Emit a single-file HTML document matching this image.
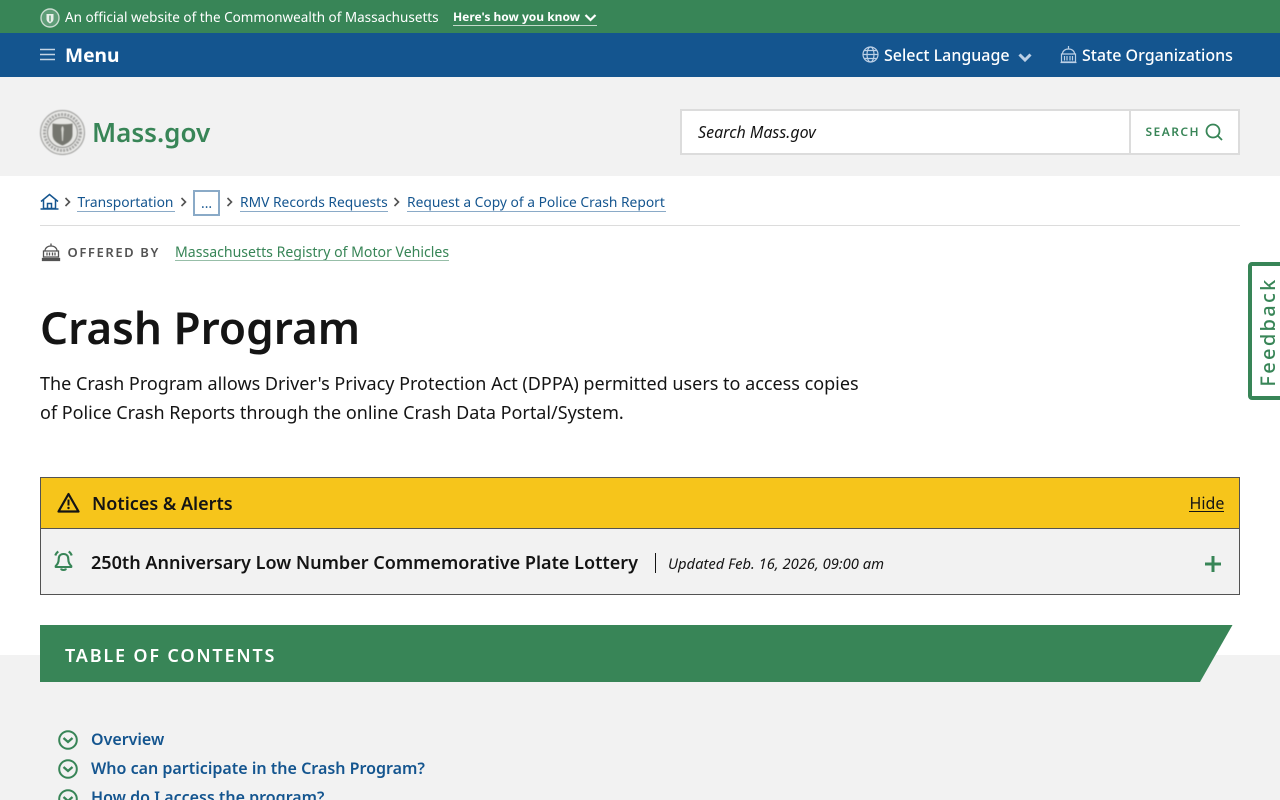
<!DOCTYPE html>
<html lang="en"><head><meta charset="utf-8"><title>Crash Program | Mass.gov</title>
<style>
html,body{margin:0;padding:0;width:1280px;height:800px;overflow:hidden;background:#fff}
body{position:relative;font-family:"Noto Sans","Liberation Sans",sans-serif;color:#141414}
.b{position:absolute}
.t{position:absolute;white-space:nowrap;line-height:1}
.u{position:absolute;height:1px}
svg{position:absolute;overflow:visible}
</style></head><body>
<div class="b" style="left:0;top:0;width:1280px;height:33px;background:#388557"></div>
<div class="b" style="left:0;top:33px;width:1280px;height:44px;background:#14558f"></div>
<div class="b" style="left:0;top:77px;width:1280px;height:99px;background:#f2f2f2"></div>
<div class="b" style="left:0;top:655px;width:1280px;height:145px;background:#f2f2f2"></div>

<svg style="left:40px;top:8px;filter:blur(.3px)" width="20" height="20" viewBox="0 0 20 20"><circle cx="10" cy="10" r="9" fill="#5f9d78" stroke="#c8dccf" stroke-width="1.4"/><path d="M6.500 6h7v5c0 2.200-1.800 3.500-3.500 4.500-1.700-1-3.500-2.300-3.500-4.500z" fill="#e8f0ea"/><path d="M10 7.500v6" stroke="#5f9d78" stroke-width="1.500"/></svg>
<div class="t" style="left:65px;top:11px;font-size:13.500px;color:#fff">An official website of the Commonwealth of Massachusetts</div>
<div class="t" style="left:453px;top:11px;font-size:12px;font-weight:700;color:#fff">Here's how you know</div>
<svg style="left:584px;top:13px" width="13" height="10" viewBox="0 0 13 10"><path d="M1.500 2l5 5 5-5" fill="none" stroke="#fff" stroke-width="2.200"/></svg>
<div class="u" style="left:453px;top:25px;width:144px;background:#c3dacb"></div>

<svg style="left:40px;top:47.500px" width="15" height="14" viewBox="0 0 15 14"><path d="M0 1.500h15M0 6.500h15M0 11.500h15" stroke="#c5d5e5" stroke-width="1.500"/></svg>
<div class="t" style="left:65px;top:45px;font-size:19.200px;font-weight:700;color:#fff">Menu</div>
<svg style="left:862px;top:46px" width="17" height="17" viewBox="0 0 17 17" fill="none" stroke="#bcd0e6" stroke-width="1.200"><circle cx="8.500" cy="8.500" r="7.500"/><ellipse cx="8.500" cy="8.500" rx="3.500" ry="7.500"/><path d="M1 8.500h15M2 4.500h13M2 12.500h13"/></svg>
<div class="t" style="left:884px;top:47px;font-size:16px;font-weight:500;color:#fff">Select Language</div>
<svg style="left:1018px;top:52px" width="14" height="11" viewBox="0 0 14 11"><path d="M1.500 2.500l5.500 5.500 5.500-5.500" fill="none" stroke="#bcd0e6" stroke-width="3"/></svg>
<svg style="left:1060px;top:46px" width="17" height="18" viewBox="0 0 17 18" fill="none" stroke="#bcd0e6" stroke-width="1.200"><path d="M2.500 8c0-3 2.500-5 6-5s6 2 6 5zM8.500 0v3M1.500 8h14v8h-14zM.5 16.500h16M4.500 10v4.500M7 10v4.500M10 10v4.500M12.500 10v4.500"/></svg>
<div class="t" style="left:1082px;top:47px;font-size:16px;font-weight:500;color:#fff">State Organizations</div>

<svg style="left:40px;top:110px;filter:blur(.6px)" width="46" height="46" viewBox="0 0 46 46"><circle cx="22.500" cy="22.500" r="22" fill="#e9e9e7" stroke="#9a9a98"/><circle cx="22.500" cy="22.500" r="18" fill="none" stroke="#a5a5a3" stroke-width="3" stroke-dasharray="2 1.200"/><circle cx="22.500" cy="22.500" r="15" fill="#e7e7e4" stroke="#8b8b88"/><path d="M12.500 13.500c6 1 14 1 20 0v11c0 6-5 9-10 11-5-2-10-5-10-11z" fill="#75766f"/><path d="M22.500 16c2 2 1 5 1 6l-.5 9h-1l-.5-9c0-1-1-4 1-6z" fill="#d7d7d2"/></svg>
<div class="t" style="left:92px;top:119px;font-size:26px;font-weight:600;color:#388557">Mass.gov</div>

<div class="b" style="left:680px;top:109px;width:556px;height:42px;background:#fff;border:2px solid #dcdcdc"></div>
<div class="b" style="left:1129px;top:111px;width:2px;height:42px;background:#dcdcdc"></div>
<div class="t" style="left:698px;top:124px;font-size:16px;font-style:italic;color:#141414">Search Mass.gov</div>
<div class="t" style="left:1145.500px;top:126px;font-size:12px;font-weight:600;letter-spacing:1.450px;color:#388557">SEARCH</div>
<svg style="left:1205px;top:123px" width="18" height="18" viewBox="0 0 18 18" fill="none" stroke="#388557" stroke-width="1.800"><circle cx="8" cy="8" r="6.500"/><path d="M12.500 12.500l4.500 4.500"/></svg>

<svg style="left:40px;top:193px" width="19" height="17" viewBox="0 0 19 17" fill="none" stroke="#14558f" stroke-width="1.500"><path d="M1 8.500l8.500-7 8.500 7M3.500 7v8.500h12V7M7.500 15.500v-5h4v5M.5 16h18"/></svg>
<svg style="left:64px;top:197px" width="8" height="10" viewBox="0 0 8 10"><path d="M1.500 1l4 4-4 4" fill="none" stroke="#535353" stroke-width="1.600"/></svg>
<div class="t" style="left:77.500px;top:196px;font-size:13.800px;color:#14558f">Transportation</div>
<div class="u" style="left:77px;top:211px;width:98px;background:#8aaac7"></div>
<svg style="left:180px;top:197px" width="8" height="10" viewBox="0 0 8 10"><path d="M1.500 1l4 4-4 4" fill="none" stroke="#535353" stroke-width="1.600"/></svg>
<div class="b" style="left:193px;top:190px;width:23px;height:22px;border:2px solid #8aaac7"></div>
<div class="t" style="left:201px;top:197px;font-size:13.800px;color:#14558f">...</div>
<svg style="left:226px;top:197px" width="8" height="10" viewBox="0 0 8 10"><path d="M1.500 1l4 4-4 4" fill="none" stroke="#535353" stroke-width="1.600"/></svg>
<div class="t" style="left:240px;top:196px;font-size:13.800px;color:#14558f">RMV Records Requests</div>
<div class="u" style="left:240px;top:211px;width:148px;background:#8aaac7"></div>
<svg style="left:393px;top:197px" width="8" height="10" viewBox="0 0 8 10"><path d="M1.500 1l4 4-4 4" fill="none" stroke="#535353" stroke-width="1.600"/></svg>
<div class="t" style="left:407px;top:196px;font-size:13.800px;color:#14558f">Request a Copy of a Police Crash Report</div>
<div class="u" style="left:407px;top:211px;width:259px;background:#8aaac7"></div>
<div class="u" style="left:40px;top:225px;width:1200px;background:#dcdcdc"></div>

<svg style="left:42px;top:243px" width="18" height="18" viewBox="0 0 18 18" fill="none" stroke="#535353" stroke-width="1.300"><path d="M3 8c0-3 2.500-5 6-5s6 2 6 5zM9 .5V3M1.500 8h15v6h-15zM5 9.500v3M7.500 9.500v3M10.500 9.500v3M13 9.500v3"/><path d="M.5 15.500h17v2H.5z" fill="#535353"/></svg>
<div class="t" style="left:67.500px;top:246px;font-size:13px;font-weight:600;letter-spacing:1.600px;color:#535353">OFFERED BY</div>
<div class="t" style="left:175px;top:246px;font-size:14.100px;color:#388557">Massachusetts Registry of Motor Vehicles</div>
<div class="u" style="left:175px;top:260px;width:274px;background:#97bea8"></div>

<div class="t" style="left:40px;top:305px;font-size:44.100px;font-weight:600;color:#141414">Crash Program</div>
<div class="t" style="left:40px;top:375px;font-size:18px;color:#141414">The Crash Program allows Driver's Privacy Protection Act (DPPA) permitted users to access copies</div>
<div class="t" style="left:40px;top:404px;font-size:18px;color:#141414">of Police Crash Reports through the online Crash Data Portal/System.</div>

<div class="b" style="left:40px;top:477px;width:1198px;height:51px;background:#f6c51b;border:1px solid #535353"></div>
<div class="b" style="left:40px;top:528px;width:1198px;height:65px;background:#f2f2f2;border:1px solid #535353"></div>
<svg style="left:57px;top:492px" width="23" height="21" viewBox="0 0 23 21"><path d="M11.500 2L21.500 19.500h-20z" fill="none" stroke="#141414" stroke-width="2.200" stroke-linejoin="round"/><path d="M11.500 7.500v6" stroke="#141414" stroke-width="2"/><circle cx="11.500" cy="16" r="1.200" fill="#141414"/></svg>
<div class="t" style="left:92px;top:495px;font-size:18px;font-weight:600;color:#141414">Notices &amp; Alerts</div>
<div class="t" style="left:1189.500px;top:495px;font-size:16px;color:#141414">Hide</div>
<div class="u" style="left:1189px;top:511px;width:35px;background:#141414"></div>

<svg style="left:53px;top:550px" width="21" height="22" viewBox="0 0 21 22" fill="none" stroke="#388557" stroke-width="2.100" stroke-linejoin="round"><path d="M10.500 4c-3 0-4.800 2-4.800 5 0 3-.7 5-3 7v1h15.600v-1c-2.300-2-3-4-3-7 0-3-1.800-5-4.800-5zM8 18.500c.5 2 4.500 2 5 0M2.300 5.500c.5-1.500 1.500-3 3-4M18.700 5.500c-.5-1.500-1.500-3-3-4"/></svg>
<div class="t" style="left:91px;top:554px;font-size:18.030px;font-weight:600;color:#141414">250th Anniversary Low Number Commemorative Plate Lottery</div>
<div class="b" style="left:655px;top:553px;width:1px;height:20px;background:#141414"></div>
<div class="t" style="left:668px;top:556.500px;font-size:14.750px;font-style:italic;color:#141414">Updated Feb. 16, 2026, 09:00 am</div>
<svg style="left:1205px;top:556px" width="16" height="16" viewBox="0 0 16 16"><path d="M8 0v16M0 8h16" stroke="#388557" stroke-width="3"/></svg>

<svg style="left:40px;top:625px" width="1193" height="57" viewBox="0 0 1193 57"><path d="M0 0H1192.500L1160 57H0z" fill="#388557"/></svg>
<div class="t" style="left:65px;top:647px;font-size:18px;font-weight:600;letter-spacing:1.820px;color:#fff">TABLE OF CONTENTS</div>

<svg style="left:58px;top:730px" width="20" height="20" viewBox="0 0 20 20" fill="none" stroke="#388557" stroke-width="2"><circle cx="10" cy="10" r="8.800"/><path d="M5.500 8l4.500 4 4.500-4" stroke-width="2.300"/></svg>
<div class="t" style="left:91px;top:731px;font-size:16px;font-weight:600;color:#14558f">Overview</div>
<svg style="left:58px;top:759px" width="20" height="20" viewBox="0 0 20 20" fill="none" stroke="#388557" stroke-width="2"><circle cx="10" cy="10" r="8.800"/><path d="M5.500 8l4.500 4 4.500-4" stroke-width="2.300"/></svg>
<div class="t" style="left:91px;top:760px;font-size:16.050px;font-weight:600;color:#14558f">Who can participate in the Crash Program?</div>
<svg style="left:58px;top:789px" width="20" height="20" viewBox="0 0 20 20" fill="none" stroke="#388557" stroke-width="2"><circle cx="10" cy="10" r="8.800"/><path d="M5.500 8l4.500 4 4.500-4" stroke-width="2.300"/></svg>
<div class="t" style="left:91px;top:789px;font-size:16px;font-weight:600;color:#14558f">How do I access the program?</div>

<div class="b" style="left:1248px;top:262px;width:40px;height:138px;box-sizing:border-box;background:#fff;border:4px solid #388557;border-radius:4px"></div>
<div class="t" style="left:1268px;top:332px;font-size:20px;font-weight:500;letter-spacing:2.300px;color:#388557;transform:translate(-50%,-50%) rotate(-90deg)">Feedback</div>
</body></html>
